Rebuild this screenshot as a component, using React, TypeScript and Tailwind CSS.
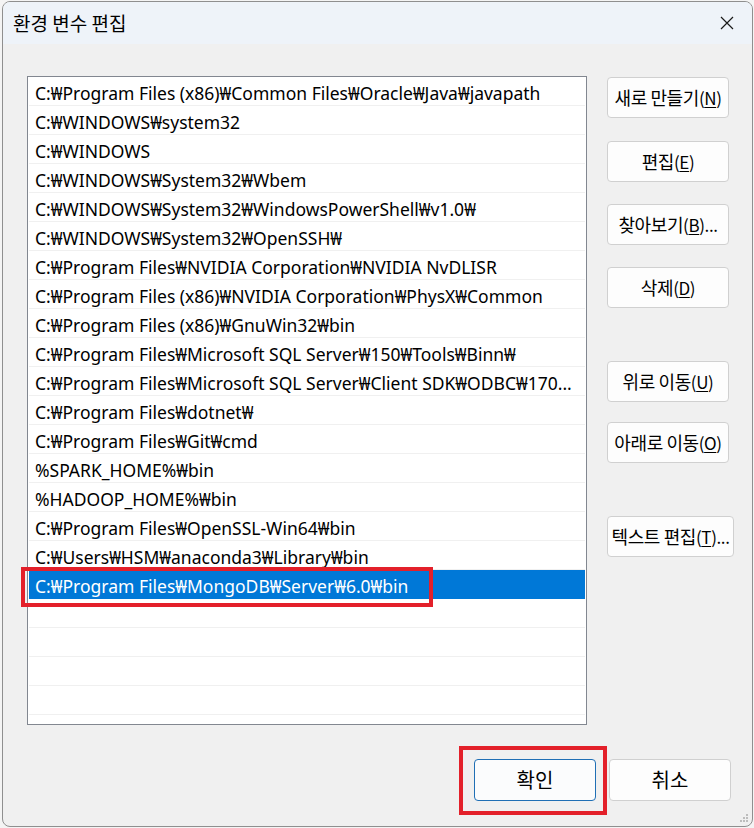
import React from "react";

const W = "\u20A9";
const rows = [
  `C:${W}Program Files (x86)${W}Common Files${W}Oracle${W}Java${W}javapath`,
  `C:${W}WINDOWS${W}system32`,
  `C:${W}WINDOWS`,
  `C:${W}WINDOWS${W}System32${W}Wbem`,
  `C:${W}WINDOWS${W}System32${W}WindowsPowerShell${W}v1.0${W}`,
  `C:${W}WINDOWS${W}System32${W}OpenSSH${W}`,
  `C:${W}Program Files${W}NVIDIA Corporation${W}NVIDIA NvDLISR`,
  `C:${W}Program Files (x86)${W}NVIDIA Corporation${W}PhysX${W}Common`,
  `C:${W}Program Files (x86)${W}GnuWin32${W}bin`,
  `C:${W}Program Files${W}Microsoft SQL Server${W}150${W}Tools${W}Binn${W}`,
  `C:${W}Program Files${W}Microsoft SQL Server${W}Client SDK${W}ODBC${W}170...`,
  `C:${W}Program Files${W}dotnet${W}`,
  `C:${W}Program Files${W}Git${W}cmd`,
  `%SPARK_HOME%${W}bin`,
  `%HADOOP_HOME%${W}bin`,
  `C:${W}Program Files${W}OpenSSL-Win64${W}bin`,
  `C:${W}Users${W}HSM${W}anaconda3${W}Library${W}bin`,
  `C:${W}Program Files${W}MongoDB${W}Server${W}6.0${W}bin`,
];

const font = {
  fontFamily: '"Noto Sans", "Noto Sans CJK KR", sans-serif',
};
const kr = { fontFamily: '"Noto Sans CJK KR", sans-serif' };

function Btn({
  label,
  mn,
  tail = "",
  className = "",
}: {
  label: string;
  mn: string;
  tail?: string;
  className?: string;
}) {
  return (
    <div
      className={`h-[41px] flex items-center justify-center rounded-[4px] border border-[#d0d0d0] bg-[#fdfdfd] text-[18px] text-black whitespace-nowrap tracking-[-0.4px] ${className}`}
    >
      {label}
      <span className="text-[17px]">
        (<span className="underline underline-offset-2">{mn}</span>){tail}
      </span>
    </div>
  );
}

export default function App() {
  return (
    <div
      className="w-[754px] h-[828px] bg-[#f4f4f4] relative overflow-hidden"
      style={font}
    >
      <div className="absolute left-[2px] top-[1px] w-[751px] h-[826px] rounded-[8px] border border-[#8f8f8f] bg-[#f0f0f0] overflow-hidden flex flex-col">
        {/* title bar */}
        <div className="h-[42px] shrink-0 bg-[#eef3f9] flex items-center pl-[10px] pr-[18px]">
          <span className="text-[19px] text-black" style={kr}>
            환경 변수 편집
          </span>
          <div className="flex-1" />
          <svg width="14" height="14" viewBox="0 0 14 14">
            <path
              d="M1 1 L13 13 M13 1 L1 13"
              stroke="#1a1a1a"
              strokeWidth="1.2"
              fill="none"
            />
          </svg>
        </div>

        {/* body */}
        <div className="flex-1 flex flex-col pl-[24px] pt-[32px]">
          <div className="flex">
            <div className="relative w-[560px] h-[649px] border border-[#828790] bg-white overflow-hidden">
              <div className="flex flex-col px-[1px]">
                {rows.map((r, i) => {
                  const sel = i === rows.length - 1;
                  return (
                    <div
                      key={i}
                      className={`h-[29px] shrink-0 flex items-center pl-[6px] text-[17.5px] whitespace-nowrap border-b ${
                        sel
                          ? "bg-[#0078d7] text-white border-[#0078d7]"
                          : "text-black border-[#f0f0f0]"
                      }`}
                    >
                      <span className="pt-[5px]">{r}</span>
                    </div>
                  );
                })}
                {[0, 1, 2, 3, 4].map((i) => (
                  <div
                    key={"e" + i}
                    className="h-[29px] shrink-0 border-b border-[#f0f0f0]"
                  />
                ))}
              </div>
            </div>

            <div className="flex flex-col ml-[20px] pt-[1px]" style={kr}>
              <Btn className="w-[122px]" label="새로 만들기" mn="N" />
              <Btn className="w-[122px] mt-[23px]" label="편집" mn="E" />
              <Btn className="w-[122px] mt-[22px]" label="찾아보기" mn="B" tail="..." />
              <Btn className="w-[122px] mt-[22px]" label="삭제" mn="D" />
              <Btn className="w-[122px] mt-[53px]" label="위로 이동" mn="U" />
              <Btn className="w-[122px] mt-[20px]" label="아래로 이동" mn="O" />
              <Btn className="w-[127px] mt-[53px]" label="텍스트 편집" mn="T" tail="..." />
            </div>
          </div>

          <div
            className="flex justify-end pr-[21px] mt-[34px] gap-[13px]"
            style={kr}
          >
            <div className="w-[122px] h-[42px] flex items-center justify-center rounded-[4px] border border-[#1f6fb5] bg-[#fbfcfd] text-[20px] text-black">
              확인
            </div>
            <div className="w-[122px] h-[42px] flex items-center justify-center rounded-[4px] border border-[#d0d0d0] bg-[#fdfdfd] text-[20px] text-black">
              취소
            </div>
          </div>
        </div>

        {/* resize grip */}
        <svg
          className="absolute right-[3px] bottom-[3px]"
          width="10"
          height="10"
          viewBox="0 0 10 10"
        >
          <rect x="7" y="1" width="2" height="2" fill="#bdbdbd" />
          <rect x="4" y="4" width="2" height="2" fill="#bdbdbd" />
          <rect x="7" y="4" width="2" height="2" fill="#bdbdbd" />
          <rect x="1" y="7" width="2" height="2" fill="#bdbdbd" />
          <rect x="4" y="7" width="2" height="2" fill="#bdbdbd" />
          <rect x="7" y="7" width="2" height="2" fill="#bdbdbd" />
        </svg>
      </div>

      {/* red annotation boxes */}
      <div className="absolute left-[21px] top-[567px] w-[412px] h-[40px] border-[4px] border-[#e3202a]" />
      <div className="absolute left-[459px] top-[746px] w-[148px] h-[69px] border-[4px] border-[#e3202a]" />
    </div>
  );
}
